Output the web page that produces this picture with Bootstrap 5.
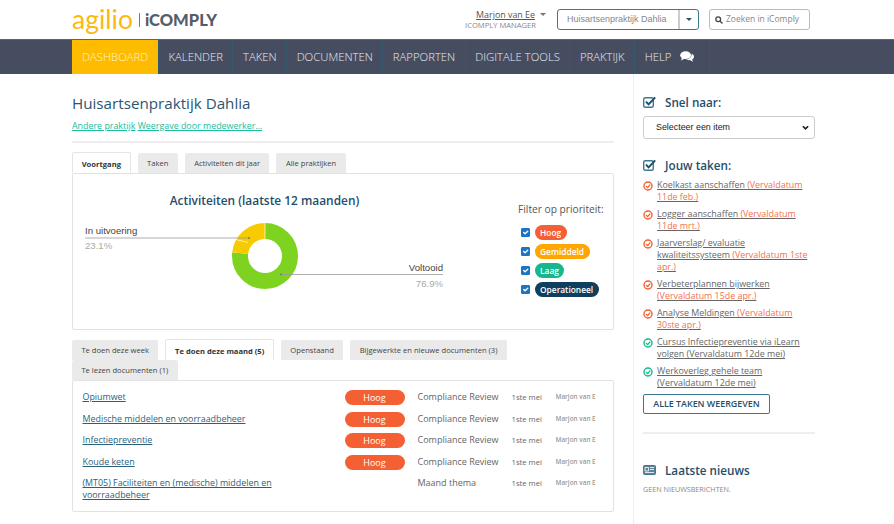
<!DOCTYPE html>
<html lang="nl">
<head>
    <meta charset="UTF-8">
    <meta name="viewport" content="width=device-width, initial-scale=1.0">
    <link href="https://cdn.jsdelivr.net/npm/bootstrap@5.3.0/dist/css/bootstrap.min.css" rel="stylesheet">
    <title>iComply</title>
    <style>
        body { font-family: "Open Sans", sans-serif; font-size: 8.9px; color: #555; background: #fff; }
        .top-head { height: 39px; padding: 0 84px 0 72px; }
        .logo-a { font-family: Lato, sans-serif; font-weight: 400; font-size: 26.5px; line-height: 34px; color: #fdb913; }
        .logo-bar { width: 1px; height: 14px; background: #777; margin: 11px 5px 0 6px; }
        .logo-b { font-family: Lato, sans-serif; font-weight: 900; font-size: 16.5px; line-height: 34px; color: #565c68; margin-top: 1px; }
        .user-box { text-align: right; margin-right: 21px; line-height: 11px; margin-top: 1px; }
        .user-name { font-size: 8.9px; color: #555; text-decoration: underline; }
        .user-caret { display: inline-block; border: 3px solid transparent; border-top: 3.5px solid #777; border-bottom: 0; margin: 0 -10px 2px 5px; vertical-align: middle; }
        .user-role { font-size: 7.6px; color: #888; display: block; }
        .prak-box { width: 142px; height: 21px; border: 1px solid #3f7895; border-radius: 3px; margin-right: 10px; font-family: "Liberation Sans", sans-serif; color: #888; font-size: 9px; white-space: nowrap; }
        .prak-box span:first-child { flex: 1; padding-left: 9px; line-height: 19px; border-right: 2px solid #ccc; }
        .prak-arrow { width: 18px; }
        .prak-arrow i { display: block; border: 3px solid transparent; border-top: 3.5px solid #2b5672; border-bottom: 0; }
        .zoek-box { width: 101px; height: 21px; border: 1px solid #bbb; border-radius: 3px; padding-left: 5px; color: #888; font-size: 8.5px; gap: 3px; white-space: nowrap; }
        .main-nav { background: #474d60; height: 35px; padding-left: 72px; border-top: 1px solid #5c6272; }
        .main-nav a { display: flex; align-items: center; height: 34px; padding: 0 9.5px; font-size: 11.3px; font-weight: 300; color: #e6ecf2; text-decoration: none; border-right: 1px solid #36596f; gap: 9px; }
        .main-nav a.nu { background: #fdbc00; color: #fff3cc; width: 87px; padding: 0 10px; }
        .main-nav a:last-child { padding-right: 15px; }
        .links-kant { width: 633px; padding: 17px 19px 0 72px; }
        .rechts-kant { width: 261px; border-left: 1px solid #eee; min-height: 450px; padding: 20px 0 0 9px; }
        .kop-groot { font-size: 15.2px; font-weight: 400; color: #2b5672; margin: 0; line-height: 24px; }
        .groen-links { margin-top: 4px; line-height: 14px; padding-bottom: 8px; border-bottom: 2px solid #eee; margin-bottom: 10px; }
        .groen-links a { color: #1abc9c; }
        .tab-rij { border: 0; column-gap: 7px; margin-bottom: 0; }
        .tab-rij .nav-link { font-size: 7.6px; line-height: 11px; padding: 5px 9.4px; background: #eaeaea; color: #444; border: 0; border-radius: 2px 2px 0 0; height: 20px; margin: 0; }
        .tab-rij .nav-link.active { background: #fff; font-weight: 700; color: #333; border: 1.5px solid #e5e5e5; border-bottom: 0; height: 21px; margin-top: -1px; padding: 5.5px 8.7px 5px; margin-bottom: -1px; position: relative; z-index: 2; }
        .paneel { border: 1.5px solid #e2e2e2; border-radius: 2px; }
        .paneel-chart { height: 157px; margin-bottom: 10px; }
        .chart-svg { font-family: "Liberation Sans", sans-serif; }
        .filter-kol { margin-left: auto; width: 95px; padding-top: 28px; margin-right: 9px; }
        .filter-kop { font-size: 10.2px; color: #555; white-space: nowrap; margin-bottom: 7px; line-height: 14px; margin-left: 9px; }
        .filter-rij { height: 19px; gap: 5px; padding-left: 11.5px; }
        .filter-rij .form-check-input { width: 9px; height: 9px; margin: 0; border-radius: 1px; background-size: 9px; background-color: #1d74c2; border-color: #1d74c2; flex: none; }
        .pil { display: inline-block; border-radius: 8px; color: #fff; font-size: 8.4px; font-weight: 600; line-height: 15px; height: 15px; padding: 0 5.5px; white-space: nowrap; }
        .pil-hoog { background: #f45f34; }
        .pil-mid { background: #ffa600; }
        .pil-laag { background: #14b88c; }
        .pil-op { background: #0f3f5c; }
        .paneel-lijst { padding: 5px 9px 6px 9.5px; height: 132px; margin-top: 0; }
        .doc-rij { min-height: 21.5px; align-items: flex-start; line-height: 12px; padding-top: 5px; }
        .doc-naam { width: 262px; padding-right: 40px; font-size: 8.9px; }
        .doc-naam a { color: #2b5f7d; }
        .doc-pil { width: 73px; }
        .doc-pil .pil { width: 60px; text-align: center; font-weight: 400; font-size: 9px; margin-top: -1px; }
        .doc-soort { width: 94px; font-size: 9px; color: #666; white-space: nowrap; }
        .doc-datum { width: 44px; font-size: 7.7px; color: #666; white-space: nowrap; }
        .doc-wie { width: 41px; font-size: 6.4px; color: #999; white-space: nowrap; overflow: hidden; font-weight: 600; }
        .zij-kop { font-size: 11.7px; font-weight: 600; color: #1f4e6b; gap: 9px; line-height: 16px; }
        .zij-select { width: 172px; height: 23px; font-family: "Liberation Sans", sans-serif; font-size: 8.9px; color: #222; padding: 0 0 0 12px; border-radius: 3px; border: 1px solid #ccc; background-image: url("data:image/svg+xml,%3csvg xmlns='http://www.w3.org/2000/svg' viewBox='0 0 8 6'%3e%3cpath fill='none' stroke='%23222' stroke-width='2' d='M1 1.5 4 4.5 7 1.5'/%3e%3c/svg%3e"); background-position: right 5px center; background-size: 7px; margin: 6px 0 18px; }
        .taak-lijst { list-style: none; margin: 6px 0 0; padding: 0; width: 172px; }
        .taak-lijst li { display: flex; gap: 4px; line-height: 12.2px; margin-bottom: 4.6px; font-size: 8.9px; }
        .taak-lijst svg { flex: none; margin-top: 2px; }
        .taak-lijst a { color: #666; }
        .taak-lijst a span { color: #f4704a; }
        .taak-knop { border: 1.5px solid #3f7895; color: #1f4e6b; font-size: 8.9px; font-weight: 600; padding: 0; width: 127px; height: 20px; line-height: 16px; border-radius: 2px; background: #fff; display: block; margin-top: 4px; }
        .zij-lijn { width: 172px; border-top: 2px solid #eee; margin: 18px 0 28px; }
        .geen-tekst { font-size: 7.2px; color: #888; margin-top: 6px; }
    </style>
</head>
<body>

    <header class="top-head d-flex align-items-center">
        <div class="d-flex align-items-start">
            <span class="logo-a">agilio</span>
            <span class="logo-bar"></span>
            <span class="logo-b">iCOMPLY</span>
        </div>
        <div class="ms-auto user-box">
            <span class="user-name">Marjon van Ee</span><span class="user-caret"></span>
            <span class="user-role">ICOMPLY MANAGER</span>
        </div>
        <div class="prak-box d-flex align-items-center">
            <span>Huisartsenpraktijk Dahlia</span>
            <span class="prak-arrow d-flex justify-content-center"><i></i></span>
        </div>
        <div class="zoek-box d-flex align-items-center">
            <svg width="8" height="8" viewBox="0 0 10 10"><circle cx="4" cy="4" r="3" fill="none" stroke="#444" stroke-width="1.6"/><path d="M6.2 6.2 9.3 9.3" stroke="#444" stroke-width="1.8"/></svg>
            <span>Zoeken in iComply</span>
        </div>
    </header>

    <nav class="main-nav d-flex">
        <a class="nu" href="#">DASHBOARD</a>
        <a href="#">KALENDER</a>
        <a href="#">TAKEN</a>
        <a href="#">DOCUMENTEN</a>
        <a href="#">RAPPORTEN</a>
        <a href="#">DIGITALE TOOLS</a>
        <a href="#">PRAKTIJK</a>
        <a href="#">HELP
            <svg width="14" height="12" viewBox="0 0 14 12"><ellipse cx="5.6" cy="4.2" rx="5.4" ry="3.9" fill="#fff"/><path d="M2 6.5 1 9.6 5 7.6Z" fill="#fff"/><path d="M11.6 2.8C13.2 3.5 14 4.6 14 5.8 14 6.9 13.3 7.8 12.2 8.4L13 10.8 9.8 9.1C8.2 9.3 6.6 8.8 5.7 8.3 9 8.4 12 6.3 11.6 2.8Z" fill="#fff"/></svg>
        </a>
    </nav>

    <div class="d-flex">
        <main class="links-kant">
            <h1 class="kop-groot">Huisartsenpraktijk Dahlia</h1>
            <div class="groen-links"><a href="#">Andere praktijk</a> <a href="#">Weergave door medewerker...</a></div>

            <ul class="nav tab-rij">
                <li class="nav-item"><a class="nav-link active" href="#">Voortgang</a></li>
                <li class="nav-item"><a class="nav-link" href="#">Taken</a></li>
                <li class="nav-item"><a class="nav-link" href="#">Activiteiten dit jaar</a></li>
                <li class="nav-item"><a class="nav-link" href="#">Alle praktijken</a></li>
            </ul>
            <div class="paneel paneel-chart d-flex">
                <svg class="chart-svg" width="420" height="154" viewBox="73 174.5 420 154">
                    <text x="264.5" y="205" text-anchor="middle" style="font-family:'Open Sans',sans-serif" font-size="11.9" font-weight="600" fill="#1f4e6b">Activiteiten (laatste 12 maanden)</text>
                    <g transform="rotate(-90 265 256.5)" fill="none" stroke-width="16">
                        <circle cx="265" cy="256.5" r="25" pathLength="100" stroke="#7ed321" stroke-dasharray="76.9 100"/>
                        <circle cx="265" cy="256.5" r="25" pathLength="100" stroke="#f8cb00" stroke-dasharray="23.1 100" stroke-dashoffset="-76.9"/>
                    </g>
                    <path d="M265 223v17M232 239l16 4" stroke="#fff" stroke-width=".7"/>
                    <text x="85" y="234" font-size="9.6" fill="#444">In uitvoering</text>
                    <path d="M85 238.5H249" stroke="#999" stroke-width=".8"/><circle cx="249" cy="238.5" r="1" fill="#777"/>
                    <text x="85" y="249" font-size="9.6" fill="#aaa">23.1%</text>
                    <text x="443" y="271" font-size="9.6" fill="#444" text-anchor="end">Voltooid</text>
                    <path d="M281 275H443" stroke="#999" stroke-width=".8"/><circle cx="281" cy="275" r="1" fill="#777"/>
                    <text x="443" y="287" font-size="9.6" fill="#aaa" text-anchor="end">76.9%</text>
                </svg>
                <div class="filter-kol">
                    <div class="filter-kop">Filter op prioriteit:</div>
                    <div class="filter-rij d-flex align-items-center"><input class="form-check-input" type="checkbox" checked><span class="pil pil-hoog">Hoog</span></div>
                    <div class="filter-rij d-flex align-items-center"><input class="form-check-input" type="checkbox" checked><span class="pil pil-mid">Gemiddeld</span></div>
                    <div class="filter-rij d-flex align-items-center"><input class="form-check-input" type="checkbox" checked><span class="pil pil-laag">Laag</span></div>
                    <div class="filter-rij d-flex align-items-center"><input class="form-check-input" type="checkbox" checked><span class="pil pil-op">Operationeel</span></div>
                </div>
            </div>

            <ul class="nav tab-rij">
                <li class="nav-item"><a class="nav-link" href="#">Te doen deze week</a></li>
                <li class="nav-item"><a class="nav-link active" href="#">Te doen deze maand (5)</a></li>
                <li class="nav-item"><a class="nav-link" href="#">Openstaand</a></li>
                <li class="nav-item"><a class="nav-link" href="#">Bijgewerkte en nieuwe documenten (3)</a></li>
                <li class="nav-item"><a class="nav-link" href="#">Te lezen documenten (1)</a></li>
            </ul>
            <div class="paneel paneel-lijst">
                <div class="doc-rij d-flex"><div class="doc-naam"><a href="#">Opiumwet</a></div><div class="doc-pil"><span class="pil pil-hoog">Hoog</span></div><div class="doc-soort">Compliance Review</div><div class="doc-datum">1ste mei</div><div class="doc-wie">Marjon van E</div></div>
                <div class="doc-rij d-flex"><div class="doc-naam"><a href="#">Medische middelen en voorraadbeheer</a></div><div class="doc-pil"><span class="pil pil-hoog">Hoog</span></div><div class="doc-soort">Compliance Review</div><div class="doc-datum">1ste mei</div><div class="doc-wie">Marjon van E</div></div>
                <div class="doc-rij d-flex"><div class="doc-naam"><a href="#">Infectiepreventie</a></div><div class="doc-pil"><span class="pil pil-hoog">Hoog</span></div><div class="doc-soort">Compliance Review</div><div class="doc-datum">1ste mei</div><div class="doc-wie">Marjon van E</div></div>
                <div class="doc-rij d-flex"><div class="doc-naam"><a href="#">Koude keten</a></div><div class="doc-pil"><span class="pil pil-hoog">Hoog</span></div><div class="doc-soort">Compliance Review</div><div class="doc-datum">1ste mei</div><div class="doc-wie">Marjon van E</div></div>
                <div class="doc-rij d-flex"><div class="doc-naam"><a href="#">(MT05) Faciliteiten en (medische) middelen en voorraadbeheer</a></div><div class="doc-pil"></div><div class="doc-soort">Maand thema</div><div class="doc-datum">1ste mei</div><div class="doc-wie">Marjon van E</div></div>
            </div>
        </main>

        <aside class="rechts-kant">
            <div class="zij-kop d-flex align-items-center">
                <svg width="13" height="12" viewBox="0 0 13 12"><rect x=".7" y="1.7" width="9.6" height="9.6" rx="1.5" fill="none" stroke="#3f7895" stroke-width="1.4"/><path d="M3 5.6 5.6 8.4 12.2 1.4" fill="none" stroke="#1f4e6b" stroke-width="2"/></svg>
                <span>Snel naar:</span>
            </div>
            <select class="form-select zij-select"><option>Selecteer een item</option></select>

            <div class="zij-kop d-flex align-items-center">
                <svg width="13" height="12" viewBox="0 0 13 12"><rect x=".7" y="1.7" width="9.6" height="9.6" rx="1.5" fill="none" stroke="#3f7895" stroke-width="1.4"/><path d="M3 5.6 5.6 8.4 12.2 1.4" fill="none" stroke="#1f4e6b" stroke-width="2"/></svg>
                <span>Jouw taken:</span>
            </div>
            <ul class="taak-lijst">
                <li><svg width="10" height="10" viewBox="0 0 10 10"><circle cx="5" cy="5" r="4" fill="none" stroke="#f45f34" stroke-width="1.4"/><path d="M3 5 4.6 6.6 7.2 3.6" fill="none" stroke="#f45f34" stroke-width="1.3"/></svg><a href="#">Koelkast aanschaffen <span>(Vervaldatum 11de feb.)</span></a></li>
                <li><svg width="10" height="10" viewBox="0 0 10 10"><circle cx="5" cy="5" r="4" fill="none" stroke="#f45f34" stroke-width="1.4"/><path d="M3 5 4.6 6.6 7.2 3.6" fill="none" stroke="#f45f34" stroke-width="1.3"/></svg><a href="#">Logger aanschaffen <span>(Vervaldatum 11de mrt.)</span></a></li>
                <li><svg width="10" height="10" viewBox="0 0 10 10"><circle cx="5" cy="5" r="4" fill="none" stroke="#f45f34" stroke-width="1.4"/><path d="M3 5 4.6 6.6 7.2 3.6" fill="none" stroke="#f45f34" stroke-width="1.3"/></svg><a href="#">Jaarverslag/ evaluatie kwaliteitssysteem <span>(Vervaldatum 1ste apr.)</span></a></li>
                <li><svg width="10" height="10" viewBox="0 0 10 10"><circle cx="5" cy="5" r="4" fill="none" stroke="#f45f34" stroke-width="1.4"/><path d="M3 5 4.6 6.6 7.2 3.6" fill="none" stroke="#f45f34" stroke-width="1.3"/></svg><a href="#">Verbeterplannen bijwerken <span>(Vervaldatum 15de apr.)</span></a></li>
                <li><svg width="10" height="10" viewBox="0 0 10 10"><circle cx="5" cy="5" r="4" fill="none" stroke="#f45f34" stroke-width="1.4"/><path d="M3 5 4.6 6.6 7.2 3.6" fill="none" stroke="#f45f34" stroke-width="1.3"/></svg><a href="#">Analyse Meldingen <span>(Vervaldatum 30ste apr.)</span></a></li>
                <li><svg width="10" height="10" viewBox="0 0 10 10"><circle cx="5" cy="5" r="4" fill="none" stroke="#14b88c" stroke-width="1.4"/><path d="M3 5 4.6 6.6 7.2 3.6" fill="none" stroke="#14b88c" stroke-width="1.3"/></svg><a href="#">Cursus Infectiepreventie via iLearn volgen (Vervaldatum 12de mei)</a></li>
                <li><svg width="10" height="10" viewBox="0 0 10 10"><circle cx="5" cy="5" r="4" fill="none" stroke="#14b88c" stroke-width="1.4"/><path d="M3 5 4.6 6.6 7.2 3.6" fill="none" stroke="#14b88c" stroke-width="1.3"/></svg><a href="#">Werkoverleg gehele team (Vervaldatum 12de mei)</a></li>
            </ul>
            <button class="btn taak-knop" type="button">ALLE TAKEN WEERGEVEN</button>
            <div class="zij-lijn"></div>
            <div class="zij-kop d-flex align-items-center">
                <svg width="13" height="10" viewBox="0 0 13 10"><rect x=".5" y=".5" width="12" height="9" rx="1" fill="#5f8399" stroke="#3f7895"/><path d="M2 2.5H5.5V6H2ZM7 2.5H11M7 4.5H11M2 7.5H11" fill="none" stroke="#fff" stroke-width=".8"/></svg>
                <span>Laatste nieuws</span>
            </div>
            <div class="geen-tekst">GEEN NIEUWSBERICHTEN.</div>
        </aside>
    </div>

    <script src="https://cdn.jsdelivr.net/npm/bootstrap@5.3.0/dist/js/bootstrap.bundle.min.js"></script>
</body>
</html>
